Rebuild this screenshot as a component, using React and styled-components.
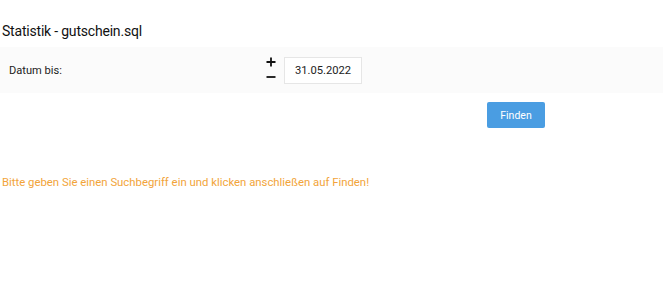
import React from "react";
import styled, { createGlobalStyle } from "styled-components";

const Global = createGlobalStyle`
  html, body { margin: 0; padding: 0; background: #fff; }
  body { font-family: Roboto, "Liberation Sans", Arial, sans-serif; color: #222; }
`;

const Page = styled.div`
  padding: 0 2px;
  width: 666px;
`;

const Title = styled.h1`
  margin: 22px 0 0 0;
  font-size: 14px;
  letter-spacing: -0.2px;
  line-height: 18px;
  font-weight: 400;
  color: #111;
`;

const FilterRow = styled.div`
  margin-top: 7px;
  margin-left: -2px;
  width: 663px;
  height: 46px;
  background: #fbfbfb;
  display: flex;
  align-items: center;
`;

const Label = styled.div`
  width: 265px;
  padding-left: 9px;
  box-sizing: border-box;
  font-size: 11.1px;
  color: #222;
`;

const Stepper = styled.div`
  display: flex;
  flex-direction: column;
  align-items: center;
  gap: 5px;
  width: 11px;
  margin-right: 8px;
  margin-top: -2px;
  color: #111;
`;

const StepIcon = styled.svg`
  display: block;
  width: 10px;
  height: 10px;
  cursor: pointer;
`;

const DateInput = styled.div`
  box-sizing: border-box;
  width: 78px;
  height: 27px;
  border: 1px solid #e6e6e6;
  background: #fff;
  display: flex;
  align-items: center;
  justify-content: center;
  font-size: 11.2px;
  color: #222;
`;

const ButtonBar = styled.div`
  width: 543px;
  display: flex;
  justify-content: flex-end;
  margin-top: 9px;
`;

const PrimaryButton = styled.button`
  width: 58px;
  height: 26px;
  border: none;
  border-radius: 2px;
  background: #4a9de2;
  color: #fff;
  font-family: inherit;
  font-size: 10.5px;
  padding: 0;
  cursor: pointer;
`;

const Notice = styled.p`
  margin: 47px 0 0 0;
  font-size: 11.35px;
  line-height: 14px;
  color: #f2a43a;
`;

const Plus = () => (
  <StepIcon viewBox="0 0 10 10" aria-label="plus">
    <path d="M5 0.5V9.5M0.5 5H9.5" stroke="#111" strokeWidth="1.8" fill="none" />
  </StepIcon>
);

const Minus = () => (
  <StepIcon viewBox="0 0 10 10" aria-label="minus">
    <path d="M0.5 5H9.5" stroke="#111" strokeWidth="1.8" fill="none" />
  </StepIcon>
);

export default function App() {
  return (
    <>
      <Global />
      <Page>
        <Title>Statistik - gutschein.sql</Title>
        <FilterRow>
          <Label>Datum bis:</Label>
          <Stepper>
            <Plus />
            <Minus />
          </Stepper>
          <DateInput>31.05.2022</DateInput>
        </FilterRow>
        <ButtonBar>
          <PrimaryButton>Finden</PrimaryButton>
        </ButtonBar>
        <Notice>Bitte geben Sie einen Suchbegriff ein und klicken anschließen auf Finden!</Notice>
      </Page>
    </>
  );
}
